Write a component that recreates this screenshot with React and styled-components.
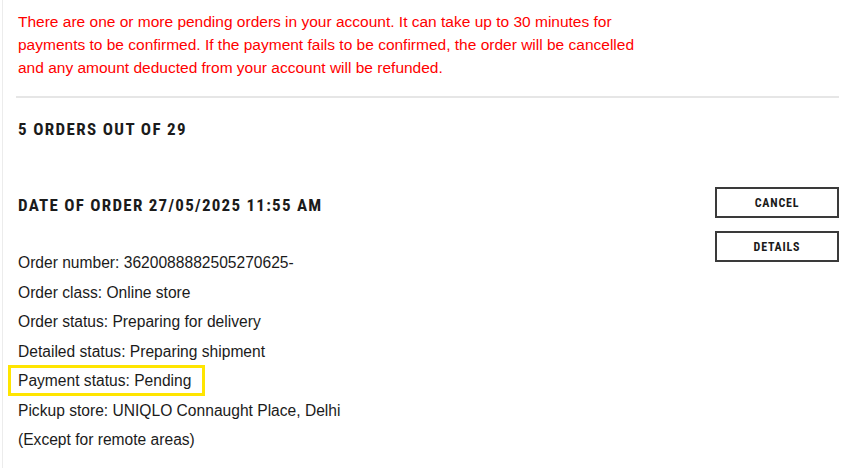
import styled, { createGlobalStyle } from 'styled-components';

const GlobalStyle = createGlobalStyle`
  html, body {
    margin: 0;
    padding: 0;
    background: #fff;
  }
  body {
    font-family: "Liberation Sans", Arial, sans-serif;
    color: #1b1b1b;
  }
`;

const details = [
  { label: 'Order number', value: '3620088882505270625-' },
  { label: 'Order class', value: 'Online store' },
  { label: 'Order status', value: 'Preparing for delivery' },
  { label: 'Detailed status', value: 'Preparing shipment' },
  { label: 'Payment status', value: 'Pending', highlight: true },
  { label: 'Pickup store', value: 'UNIQLO Connaught Place, Delhi' },
];

export default function App() {
  return (
    <>
      <GlobalStyle />
      <StyledPage>
        <StyledNotice>
          There are one or more pending orders in your account. It can take up to 30 minutes for
          payments to be confirmed. If the payment fails to be confirmed, the order will be cancelled
          and any amount deducted from your account will be refunded.
        </StyledNotice>
        <StyledDivider />
        <StyledCount>5 ORDERS OUT OF 29</StyledCount>
        <StyledOrder>
          <StyledOrderMain>
            <StyledOrderTitle>DATE OF ORDER 27/05/2025 11:55 AM</StyledOrderTitle>
            <StyledDetails>
              {details.map((d) => (
                <StyledDetail key={d.label} $highlight={d.highlight}>
                  {d.label}: {d.value}
                </StyledDetail>
              ))}
              <StyledDetail>(Except for remote areas)</StyledDetail>
            </StyledDetails>
          </StyledOrderMain>
          <StyledActions>
            <StyledButton>CANCEL</StyledButton>
            <StyledButton>DETAILS</StyledButton>
          </StyledActions>
        </StyledOrder>
      </StyledPage>
    </>
  );
}

const StyledPage = styled.div`
  margin-left: 2px;
  border-left: 1px solid #ececec;
  min-height: 468px;
  padding: 10px 8px 0 15px;
  box-sizing: border-box;
  overflow: hidden;
`;

const StyledNotice = styled.p`
  margin: 0;
  width: 630px;
  color: #ff0000;
  font-size: 15.5px;
  line-height: 23px;
`;

const StyledDivider = styled.hr`
  margin: 17px 0 0 -2px;
  border: 0;
  height: 2px;
  background: #e6e6e6;
`;

const heading = `
  font-family: "Liberation Sans Narrow", "Roboto Condensed", "Liberation Sans", sans-serif;
  font-weight: 700;
  color: #1b1b1b;
  margin: 0;
`;

const StyledCount = styled.h2`
  ${heading}
  font-size: 17px;
  line-height: 20px;
  letter-spacing: 1.35px;
  margin-top: 21px;
`;

const StyledOrder = styled.section`
  margin-top: 48px;
  display: flex;
  justify-content: space-between;
  align-items: flex-start;
`;

const StyledOrderMain = styled.div`
  display: flex;
  flex-direction: column;
  align-items: flex-start;
`;

const StyledOrderTitle = styled.h3`
  ${heading}
  font-size: 17px;
  line-height: 20px;
  letter-spacing: 1.25px;
  margin-top: 8px;
`;

const StyledActions = styled.div`
  display: flex;
  flex-direction: column;
  gap: 13px;
  width: 124px;
`;

const StyledButton = styled.button`
  ${heading}
  height: 31px;
  background: #fff;
  border: 2px solid #3a3a3a;
  font-size: 12px;
  letter-spacing: 0.8px;
  cursor: pointer;
  &:hover {
    background: #f4f4f4;
  }
`;

const StyledDetails = styled.div`
  margin-top: 33px;
  display: flex;
  flex-direction: column;
  align-items: flex-start;
`;

const StyledDetail = styled.div`
  font-size: 15.6px;
  line-height: ${(p) => (p.$highlight ? '25px' : '29.5px')};
  color: #1b1b1b;
  ${(p) =>
    p.$highlight &&
    `
    border: 3px solid #ffe500;
    padding: 0 11px 0 7px;
    margin: -0.75px 0 -0.75px -10px;
  `}
`;
